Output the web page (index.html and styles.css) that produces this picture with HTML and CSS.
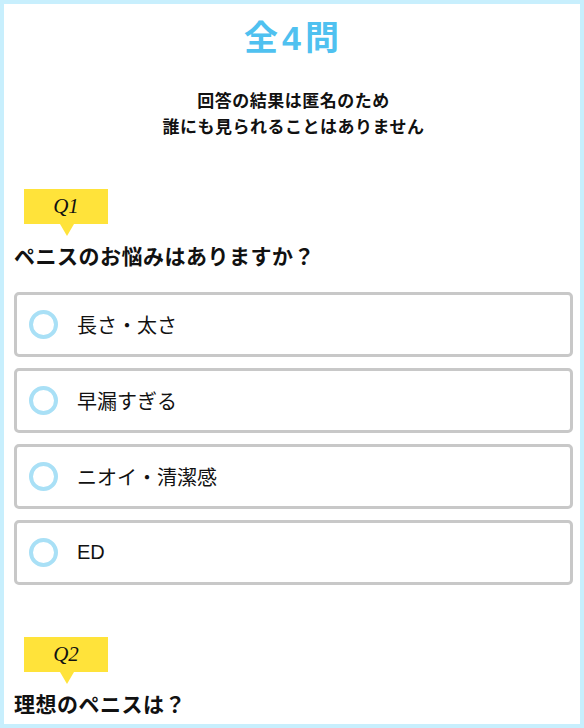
FILE: index.html
```html
<!DOCTYPE html>
<html>
<head>
<meta charset="utf-8">
<link rel="stylesheet" href="styles.css">
</head>
<body>
<div class="frame">
  <h1 class="title">全4問</h1>
  <p class="lead">回答の結果は匿名のため<br>誰にも見られることはありません</p>

  <div class="question">
    <div class="qlabel">Q1</div>
    <h2 class="qtext">ペニスのお悩みはありますか？</h2>
    <ul class="choices">
      <li class="choice"><span class="radio"></span>長さ・太さ</li>
      <li class="choice"><span class="radio"></span>早漏すぎる</li>
      <li class="choice"><span class="radio"></span>ニオイ・清潔感</li>
      <li class="choice"><span class="radio"></span>ED</li>
    </ul>
  </div>

  <div class="question">
    <div class="qlabel">Q2</div>
    <h2 class="qtext">理想のペニスは？</h2>
  </div>
</div>
</body>
</html>
```

FILE: styles.css
```css
html, body {
  margin: 0;
  padding: 0;
}
body {
  font-family: "Liberation Sans", "Noto Sans CJK JP", sans-serif;
  color: #111;
  background: #c8effd;
}
.frame {
  box-sizing: border-box;
  height: 728px;
  overflow: hidden;
  border: 4px solid #c8effd;
  background: #fff;
  padding: 0 7px 0 10px;
}
.title {
  margin: 14px 0 0;
  font-size: 34px;
  line-height: 40px;
  font-weight: bold;
  color: #4fc1f0;
  text-align: center;
  letter-spacing: 4px;
}
.lead {
  margin: 31px 0 0;
  font-size: 17px;
  line-height: 26px;
  font-weight: bold;
  text-align: center;
  letter-spacing: 0.5px;
}
.question {
  margin-top: 48px;
}
.question + .question {
  margin-top: 52px;
}
.qlabel {
  position: relative;
  width: 84px;
  height: 35px;
  margin-left: 10px;
  background: #ffe33a;
  font-family: "Liberation Serif", serif;
  font-style: italic;
  font-size: 21px;
  line-height: 35px;
  text-align: center;
}
.qlabel:after {
  content: "";
  position: absolute;
  left: 36px;
  top: 35px;
  border-left: 7px solid transparent;
  border-right: 7px solid transparent;
  border-top: 12px solid #ffe33a;
}
.qtext {
  margin: 18px 0 0;
  font-size: 21px;
  line-height: 30px;
  font-weight: bold;
  letter-spacing: 0.5px;
}
.choices {
  list-style: none;
  margin: 20px 0 0;
  padding: 0;
  display: flex;
  flex-direction: column;
  gap: 11px;
}
.choice {
  box-sizing: border-box;
  height: 65px;
  border: 3px solid #c8c8c8;
  border-radius: 5px;
  padding: 0 12px;
  display: flex;
  align-items: center;
  font-size: 20px;
}
.radio {
  box-sizing: border-box;
  width: 29px;
  height: 29px;
  border: 4px solid #a9e0f6;
  border-radius: 50%;
  margin-right: 19px;
}
```
